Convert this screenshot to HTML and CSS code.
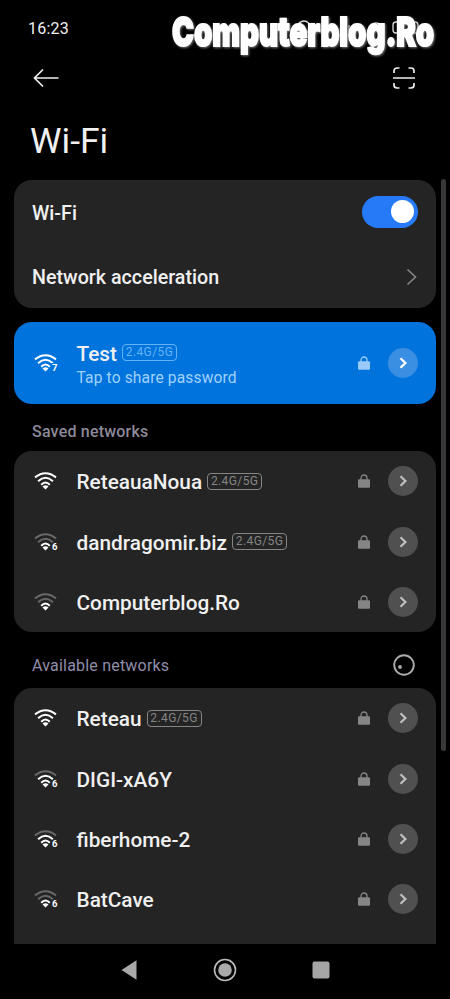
FILE: index.html
```html
<!DOCTYPE html>
<html lang="en">
<head>
<meta charset="utf-8">
<title>Wi-Fi</title>
<link rel="stylesheet" href="styles.css">
</head>
<body>
<svg class="defs" aria-hidden="true">
  <symbol id="arc3" viewBox="0 0 24 18"><path d="M1 5.400Q11.500 -2.800 22 5.400"/></symbol>
  <symbol id="arc2" viewBox="0 0 24 18"><path d="M4.100 9.200Q11.500 2.400 18.900 9.200"/></symbol>
  <symbol id="arc1" viewBox="0 0 24 18"><path d="M7.200 12.700Q11.500 8.400 15.800 12.700"/></symbol>
  <symbol id="dot" viewBox="0 0 24 18"><path d="M8.500 14.500Q11.500 12 14.500 14.500L11.500 17.600Z"/></symbol>
  <symbol id="lock" viewBox="0 0 12 14"><path d="M3 6V4a3 3 0 0 1 6 0v2" fill="none" stroke="currentColor" stroke-width="1.300"/><rect y="5.300" width="12" height="8.500" rx="1.200" fill="currentColor"/></symbol>
  <symbol id="chev" viewBox="0 0 30 30"><path d="M12.500 10.200L17.400 15L12.500 19.800" fill="none" stroke="currentColor" stroke-width="2.300"/></symbol>
</svg>
<div class="screen">
  <header class="status"><span class="time">16:23</span>
    <svg class="sysicons" width="160" height="18" viewBox="0 0 160 18"><g fill="none" stroke="#ddd" stroke-width="1.300"><path d="M1 5l7 7M1 12l7-7"/><circle cx="29" cy="8" r="6"/><path d="M24 3l10 12M45 13v-3M49 13V7M53 13V4M70 13v-4M74 13V6"/><path d="M96 6q5-4 10 0M96 9q5-4 10 0"/><rect x="118" y="3" width="25" height="11" rx="3"/></g></svg>
  </header>
  <div class="toolbar">
    <svg width="26" height="20" viewBox="0 0 26 20"><path d="M10 1.500L1.500 10L10 18.500M1.500 10H25.500" fill="none" stroke="#eee" stroke-width="1.700"/></svg>
    <svg width="22" height="22" viewBox="0 0 22 22"><path d="M1 6V4a3 3 0 0 1 3-3h2.500M15.500 1H18a3 3 0 0 1 3 3v2M1 16v2a3 3 0 0 0 3 3h2.500M15.500 21H18a3 3 0 0 0 3-3v-2M0 11h22" fill="none" stroke="#eee" stroke-width="1.700"/></svg>
  </div>
  <h1 class="title">Wi-Fi</h1>
  <main class="content">
    <section class="card settings">
      <div class="setting"><span>Wi-Fi</span><span class="switch"><i class="knob"></i></span></div>
      <div class="setting"><span>Network acceleration</span><svg width="12" height="18" viewBox="0 0 12 18"><path d="M1.500 1.500L9.500 9L1.500 16.500" fill="none" stroke="#858585" stroke-width="1.600"/></svg></div>
    </section>
    <section class="card current">
      <div class="row">
        <svg class="wifi" viewBox="0 0 24 18"><use href="#arc3"/><use href="#arc2"/><use href="#arc1"/><use href="#dot"/><text x="17.900" y="17.400">7</text></svg>
        <div class="info"><div class="line"><span class="name">Test</span><span class="badge">2.4G/5G</span></div><div class="sub">Tap to share password</div></div>
        <svg class="lock"><use href="#lock"/></svg><svg class="go"><use href="#chev"/></svg>
      </div>
    </section>
    <h2 class="label saved">Saved networks</h2>
    <section class="card list">
      <div class="row">
        <svg class="wifi" viewBox="0 0 24 18"><use href="#arc3"/><use href="#arc2"/><use href="#arc1"/><use href="#dot"/></svg>
        <div class="info line"><span class="name">ReteauaNoua</span><span class="badge">2.4G/5G</span></div>
        <svg class="lock"><use href="#lock"/></svg><svg class="go"><use href="#chev"/></svg>
      </div>
      <div class="row">
        <svg class="wifi" viewBox="0 0 24 18"><use class="dim" href="#arc3"/><use class="dim" href="#arc2"/><use href="#arc1"/><use href="#dot"/><text x="17.900" y="17.400">6</text></svg>
        <div class="info line"><span class="name">dandragomir.biz</span><span class="badge">2.4G/5G</span></div>
        <svg class="lock"><use href="#lock"/></svg><svg class="go"><use href="#chev"/></svg>
      </div>
      <div class="row">
        <svg class="wifi" viewBox="0 0 24 18"><use class="dim" href="#arc3"/><use class="dim" href="#arc2"/><use href="#arc1"/><use href="#dot"/></svg>
        <div class="info line"><span class="name">Computerblog.Ro</span></div>
        <svg class="lock"><use href="#lock"/></svg><svg class="go"><use href="#chev"/></svg>
      </div>
    </section>
    <h2 class="label available"><span>Available networks</span><svg width="22" height="22" viewBox="0 0 22 22"><circle cx="11" cy="11" r="9.800" fill="none" stroke="#aaa" stroke-width="1.900"/><circle cx="7" cy="13" r="1.900" fill="#aaa"/></svg></h2>
    <section class="card list open">
      <div class="row">
        <svg class="wifi" viewBox="0 0 24 18"><use href="#arc3"/><use href="#arc2"/><use href="#arc1"/><use href="#dot"/></svg>
        <div class="info line"><span class="name">Reteau</span><span class="badge">2.4G/5G</span></div>
        <svg class="lock"><use href="#lock"/></svg><svg class="go"><use href="#chev"/></svg>
      </div>
      <div class="row">
        <svg class="wifi" viewBox="0 0 24 18"><use class="dim" href="#arc3"/><use href="#arc2"/><use href="#arc1"/><use href="#dot"/><text x="17.900" y="17.400">6</text></svg>
        <div class="info line"><span class="name">DIGI-xA6Y</span></div>
        <svg class="lock"><use href="#lock"/></svg><svg class="go"><use href="#chev"/></svg>
      </div>
      <div class="row">
        <svg class="wifi" viewBox="0 0 24 18"><use class="dim" href="#arc3"/><use href="#arc2"/><use href="#arc1"/><use href="#dot"/><text x="17.900" y="17.400">6</text></svg>
        <div class="info line"><span class="name">fiberhome-2</span></div>
        <svg class="lock"><use href="#lock"/></svg><svg class="go"><use href="#chev"/></svg>
      </div>
      <div class="row">
        <svg class="wifi" viewBox="0 0 24 18"><use class="dim" href="#arc3"/><use class="dim" href="#arc2"/><use href="#arc1"/><use href="#dot"/><text x="17.900" y="17.400">6</text></svg>
        <div class="info line"><span class="name">BatCave</span></div>
        <svg class="lock"><use href="#lock"/></svg><svg class="go"><use href="#chev"/></svg>
      </div>
    </section>
  </main>
  <nav class="nav">
    <svg width="24" height="24" viewBox="0 0 24 24"><path d="M4.500 12L19.500 2.300V21.700Z" fill="#a8a8a8"/></svg>
    <svg width="24" height="24" viewBox="0 0 24 24"><circle cx="12" cy="12" r="10.500" fill="none" stroke="#bbb" stroke-width="1.600"/><circle cx="12" cy="12" r="6.800" fill="#aaa"/></svg>
    <svg width="24" height="24" viewBox="0 0 24 24"><rect x="3.500" y="3.500" width="17" height="17" rx="2" fill="#a5a5a5"/></svg>
  </nav>
  <div class="scrollbar"></div>
  <svg class="watermark" width="290" height="60" viewBox="0 0 290 60"><text x="12" y="46" textLength="262" lengthAdjust="spacingAndGlyphs">Computerblog.Ro</text></svg>
</div>
</body>
</html>
```

FILE: styles.css
```css
* { box-sizing: border-box; }
body { margin: 0; background: #000; color: #f0f0f0; font-family: Roboto, sans-serif; }
svg { display: block; flex: none; }
.defs { position: absolute; width: 0; height: 0; }
.screen { position: relative; width: 450px; height: 999px; overflow: hidden; display: flex; flex-direction: column; }
.status { height: 56px; padding: 0 15px 0 28px; display: flex; align-items: center; justify-content: space-between; }
.time { font-size: 16px; letter-spacing: 0.2px; }
.toolbar { height: 44px; padding: 0 35px 0 33px; display: flex; align-items: center; justify-content: space-between; }
.title { margin: 0; height: 80px; padding-left: 30px; font-size: 35.500px; line-height: 82px; font-weight: 400; letter-spacing: 0; }
.content { height: 764px; padding: 0 14px; overflow: hidden; }
.card { background: #242424; border-radius: 18px; }
.settings { height: 128px; padding: 0 18px; }
.setting { height: 64px; display: flex; align-items: center; justify-content: space-between; font-size: 19.700px; font-weight: 500; padding-top: 2px; }
.switch { width: 56px; height: 32px; border-radius: 16px; background: #277af7; display: flex; align-items: center; justify-content: flex-end; padding-right: 4px; margin-top: -3px; }
.knob { width: 23px; height: 23px; border-radius: 50%; background: #fff; }
.current { margin-top: 14px; height: 82px; background: #0073dd; display: flex; align-items: center; }
.current .row { width: 100%; height: 82px; }
.current .info { margin-top: -1px; }
.row { height: 60.400px; padding: 0 18px 0 20px; display: flex; align-items: center; }
.wifi { width: 24px; height: 18px; margin-right: 18.500px; fill: none; stroke: #fff; stroke-width: 2; overflow: visible; }
.wifi text { font: 700 9.500px Roboto, sans-serif; fill: #fff; stroke: #242424; stroke-width: 2px; paint-order: stroke; }
.current .wifi text { stroke: #0073dd; }
#dot path { fill: #fff; stroke: none; }
.dim { stroke: #686868; }
.info { flex: 1; }
.line { display: flex; align-items: center; gap: 5px; }
.name { font-size: 20.800px; line-height: 28px; font-weight: 500; white-space: nowrap; padding-top: 2px; }
.badge { width: 55px; height: 17px; border: 1px solid #858585; border-radius: 4px; color: #858585; font-size: 12px; line-height: 15px; text-align: center; letter-spacing: 0.4px; }
.current .badge { color: #64b3f5; border-color: #64b3f5; }
.sub { color: #9fd2fb; font-size: 15.600px; line-height: 20px; letter-spacing: 0.130px; }
.lock { width: 12px; height: 14px; color: #858585; margin-right: 18.500px; }
.current .lock { color: #99c9f7; }
.go { width: 30px; height: 30px; border-radius: 50%; background: #505050; color: #bdbdbd; }
.current .go { background: #3b8fe3; color: #fff; }
.label { margin: 0; font-size: 16px; letter-spacing: 0.200px; font-weight: 500; color: #8c8998; padding: 0 21px 0 18px; display: flex; align-items: center; justify-content: space-between; }
.saved { height: 47px; padding-top: 8px; }
.available { height: 56px; padding-top: 10px; font-weight: 400; color: #908daa; }
.list { height: 181px; }
.open { height: 290px; border-radius: 18px 18px 0 0; }
.nav { height: 55px; padding: 0 117px 3px; display: flex; align-items: center; justify-content: space-between; }
.scrollbar { position: absolute; left: 441px; top: 179px; width: 5px; height: 572px; border-radius: 3px; background: #383838; }
.watermark { position: absolute; left: 160px; top: 0; overflow: visible; filter: drop-shadow(1px 1px 1px #777); }
.watermark text { font: 900 40px Inter, sans-serif; fill: #fff; stroke: #fff; stroke-width: 2px; }
```
